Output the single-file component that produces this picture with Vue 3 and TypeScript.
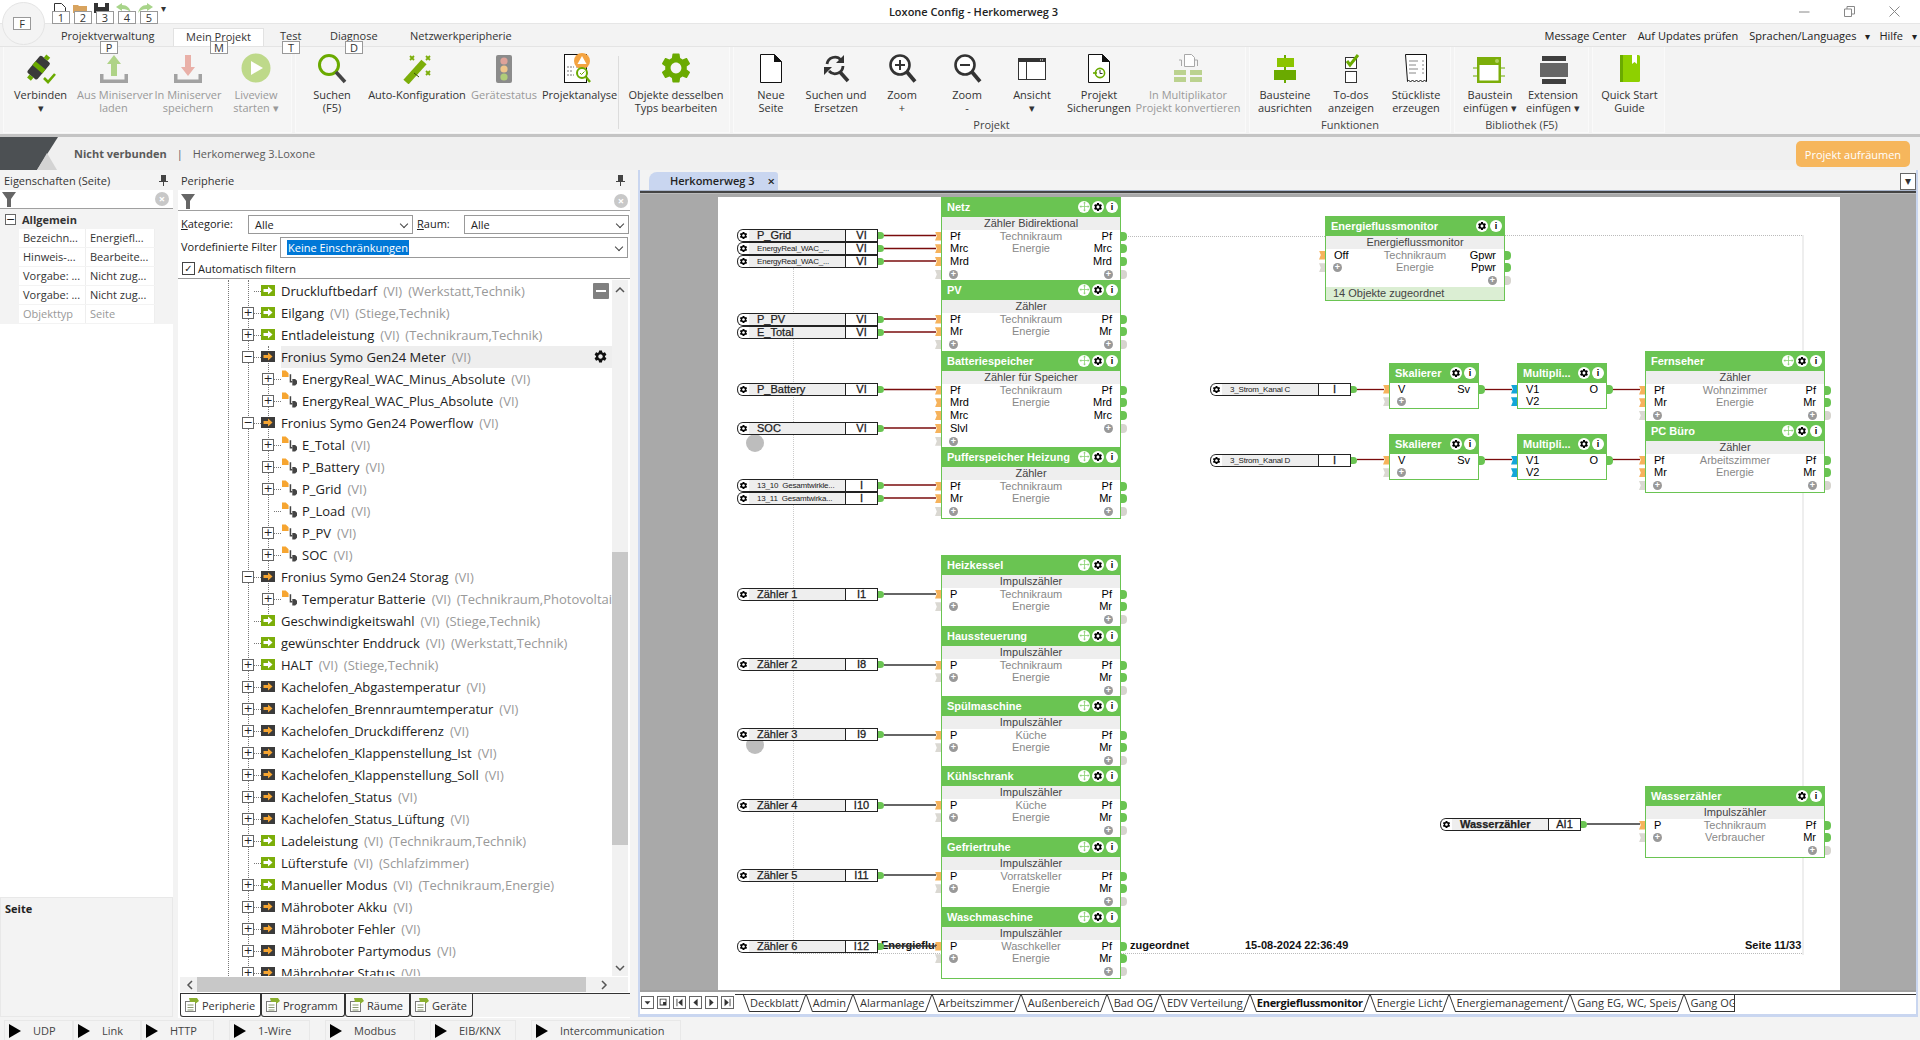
<script setup lang="ts">
type Row = [string, string, string];
interface Block {
  title: string;
  sub?: string;
  x: number;
  y: number;
  w?: number;
  rows: Row[];
  move?: boolean;
  foot?: string;
  blue?: boolean;
}
interface InBlock {
  name: string;
  val: string;
  x: number;
  y: number;
  small?: boolean;
  bold?: boolean;
  split?: number;
}

const ribbonGroups = [
  {
    w: 289,
    label: "",
    items: [
      { icon: "verbinden", w: 73, l: ["Verbinden", "▾"] },
      { icon: "upload", w: 73, l: ["Aus Miniserver", "laden"], off: true },
      { icon: "download", w: 76, l: ["In Miniserver", "speichern"], off: true },
      { icon: "live", w: 60, l: ["Liveview", "starten ▾"], off: true },
    ],
  },
  {
    w: 435,
    label: "",
    items: [
      { icon: "suchen", w: 72, l: ["Suchen", "(F5)"] },
      { icon: "auto", w: 98, l: ["Auto-Konfiguration"] },
      { icon: "status", w: 76, l: ["Gerätestatus"], off: true },
      { icon: "analyse", w: 72, l: ["Projektanalyse"], sep: true },
      { icon: "gear", w: 104, l: ["Objekte desselben", "Typs bearbeiten"] },
    ],
  },
  {
    w: 513,
    label: "Projekt",
    pad: 4,
    items: [
      { icon: "neu", w: 66, l: ["Neue", "Seite"] },
      { icon: "ersetzen", w: 64, l: ["Suchen und", "Ersetzen"] },
      { icon: "zoomin", w: 68, l: ["Zoom", "+"] },
      { icon: "zoomout", w: 62, l: ["Zoom", "-"] },
      { icon: "ansicht", w: 68, l: ["Ansicht", "▾"] },
      { icon: "sicher", w: 66, l: ["Projekt", "Sicherungen"] },
      { icon: "multi", w: 112, l: ["In Multiplikator", "Projekt konvertieren"], off: true },
    ],
  },
  {
    w: 202,
    label: "Funktionen",
    items: [
      { icon: "ausricht", w: 70, l: ["Bausteine", "ausrichten"] },
      { icon: "todo", w: 62, l: ["To-dos", "anzeigen"] },
      { icon: "stueck", w: 68, l: ["Stückliste", "erzeugen"] },
    ],
  },
  {
    w: 135,
    label: "Bibliothek (F5)",
    items: [
      { icon: "baustein", w: 70, l: ["Baustein", "einfügen ▾"] },
      { icon: "extension", w: 56, l: ["Extension", "einfügen ▾"] },
    ],
  },
  {
    w: 73,
    label: "",
    items: [{ icon: "book", w: 73, l: ["Quick Start", "Guide"] }],
  },
];

const keyTips = [
  { k: "F", x: 13, y: 17 },
  { k: "1", x: 52, y: 11 },
  { k: "2", x: 74, y: 11 },
  { k: "3", x: 96, y: 11 },
  { k: "4", x: 118, y: 11 },
  { k: "5", x: 140, y: 11 },
  { k: "P", x: 100, y: 41 },
  { k: "M", x: 210, y: 41 },
  { k: "T", x: 282, y: 41 },
  { k: "D", x: 345, y: 41 },
];

const propRows = [
  ["Bezeichn...", "Energiefl..."],
  ["Hinweis-...", "Bearbeite..."],
  ["Vorgabe: ...", "Nicht zug..."],
  ["Vorgabe: ...", "Nicht zug..."],
];

// g = grüner Eingang, d = dunkler Eingang, c = Kind-Eintrag
const n = (t: string, kind: string, exp: string, room = "") => ({ t, kind, exp, room });
const tree = [
  n("Druckluftbedarf", "g", "", "(Werkstatt,Technik)"),
  n("Eilgang", "g", "+", "(Stiege,Technik)"),
  n("Entladeleistung", "g", "+", "(Technikraum,Technik)"),
  n("Fronius Symo Gen24 Meter", "d", "-"),
  n("EnergyReal_WAC_Minus_Absolute", "c", "+"),
  n("EnergyReal_WAC_Plus_Absolute", "c", "+"),
  n("Fronius Symo Gen24 Powerflow", "d", "-"),
  n("E_Total", "c", "+"),
  n("P_Battery", "c", "+"),
  n("P_Grid", "c", "+"),
  n("P_Load", "c", ""),
  n("P_PV", "c", "+"),
  n("SOC", "c", "+"),
  n("Fronius Symo Gen24 Storag", "d", "-"),
  n("Temperatur Batterie", "c", "+", "(Technikraum,Photovoltaik)"),
  n("Geschwindigkeitswahl", "g", "", "(Stiege,Technik)"),
  n("gewünschter Enddruck", "g", "", "(Werkstatt,Technik)"),
  n("HALT", "g", "+", "(Stiege,Technik)"),
  n("Kachelofen_Abgastemperatur", "d", "+"),
  n("Kachelofen_Brennraumtemperatur", "d", "+"),
  n("Kachelofen_Druckdifferenz", "d", "+"),
  n("Kachelofen_Klappenstellung_Ist", "d", "+"),
  n("Kachelofen_Klappenstellung_Soll", "d", "+"),
  n("Kachelofen_Status", "d", "+"),
  n("Kachelofen_Status_Lüftung", "d", "+"),
  n("Ladeleistung", "g", "+", "(Technikraum,Technik)"),
  n("Lüfterstufe", "g", "", "(Schlafzimmer)"),
  n("Manueller Modus", "g", "+", "(Technikraum,Energie)"),
  n("Mähroboter Akku", "d", "+"),
  n("Mähroboter Fehler", "d", "+"),
  n("Mähroboter Partymodus", "d", "+"),
  n("Mähroboter Status", "d", "+"),
];

const periTabs = [
  { t: "Peripherie", w: 81 },
  { t: "Programm", w: 84 },
  { t: "Räume", w: 65 },
  { t: "Geräte", w: 63 },
];

const protocols = [
  { t: "UDP", w: 69 },
  { t: "Link", w: 68 },
  { t: "HTTP", w: 73, gap: 15 },
  { t: "1-Wire", w: 81, gap: 15 },
  { t: "Modbus", w: 90, gap: 15 },
  { t: "EIB/KNX", w: 86, gap: 15 },
  { t: "Intercommunication", w: 150 },
];

const pageTabs = [
  "Deckblatt",
  "Admin",
  "Alarmanlage",
  "Arbeitszimmer",
  "Außenbereich",
  "Bad OG",
  "EDV Verteilung",
  "Energieflussmonitor",
  "Energie Licht",
  "Energiemanagement",
  "Gang EG, WC, Speis",
  "Gang OG",
];

const navPaths = [
  "M3 5h7l-3.500 4z",
  "M2 2h8v8H2zM3 3v6h6V3zM6 6h3v3H6z",
  "M3 2h1v9H3zM10 2v9L5 6.500z",
  "M9 2v9L4 6.500z",
  "M4 2v9l5-4.500z",
  "M3 2v9l5-4.500zM9 2h1v9H9z",
];

const meter = (cat: string, room: string): Row[] => [
  ["Pf", room, "Pf"],
  ["Mr", cat, "Mr"],
  ["+", "", "+"],
];

const blocks: Block[] = [
  {
    title: "Netz",
    sub: "Zähler Bidirektional",
    x: 941,
    y: 197,
    move: true,
    rows: [
      ["Pf", "Technikraum", "Pf"],
      ["Mrc", "Energie", "Mrc"],
      ["Mrd", "", "Mrd"],
      ["+", "", "+"],
    ],
  },
  { title: "PV", sub: "Zähler", x: 941, y: 280, move: true, rows: meter("Energie", "Technikraum") },
  {
    title: "Batteriespeicher",
    sub: "Zähler für Speicher",
    x: 941,
    y: 351,
    move: true,
    rows: [
      ["Pf", "Technikraum", "Pf"],
      ["Mrd", "Energie", "Mrd"],
      ["Mrc", "", "Mrc"],
      ["Slvl", "", "+"],
      ["+", "", ""],
    ],
  },
  { title: "Pufferspeicher Heizung", sub: "Zähler", x: 941, y: 447, move: true, rows: meter("Energie", "Technikraum") },
  { title: "Heizkessel", sub: "Impulszähler", x: 941, y: 555, move: true, rows: impuls("Technikraum") },
  { title: "Haussteuerung", sub: "Impulszähler", x: 941, y: 626, move: true, rows: impuls("Technikraum") },
  { title: "Spülmaschine", sub: "Impulszähler", x: 941, y: 696, move: true, rows: impuls("Küche") },
  { title: "Kühlschrank", sub: "Impulszähler", x: 941, y: 766, move: true, rows: impuls("Küche") },
  { title: "Gefriertruhe", sub: "Impulszähler", x: 941, y: 837, move: true, rows: impuls("Vorratskeller") },
  { title: "Waschmaschine", sub: "Impulszähler", x: 941, y: 907, move: true, rows: impuls("Waschkeller") },
  {
    title: "Energieflussmonitor",
    sub: "Energieflussmonitor",
    x: 1325,
    y: 216,
    foot: "14 Objekte zugeordnet",
    rows: [
      ["Off", "Technikraum", "Gpwr"],
      ["+", "Energie", "Ppwr"],
      ["", "", "+"],
    ],
  },
  { title: "Skalierer", x: 1389, y: 363, w: 90, rows: [["V", "", "Sv"], ["+", "", ""]] },
  { title: "Multipli...", x: 1517, y: 363, w: 90, blue: true, rows: [["V1", "", "O"], ["V2", "", ""]] },
  { title: "Skalierer", x: 1389, y: 434, w: 90, rows: [["V", "", "Sv"], ["+", "", ""]] },
  { title: "Multipli...", x: 1517, y: 434, w: 90, blue: true, rows: [["V1", "", "O"], ["V2", "", ""]] },
  { title: "Fernseher", sub: "Zähler", x: 1645, y: 351, move: true, rows: meter("Energie", "Wohnzimmer") },
  { title: "PC Büro", sub: "Zähler", x: 1645, y: 421, move: true, rows: meter("Energie", "Arbeitszimmer") },
  { title: "Wasserzähler", sub: "Impulszähler", x: 1645, y: 786, rows: impuls("Technikraum", "Verbraucher") },
];

function impuls(room: string, cat = "Energie"): Row[] {
  return [
    ["P", room, "Pf"],
    ["+", cat, "Mr"],
    ["", "", "+"],
  ];
}

const inputs: InBlock[] = [
  { name: "P_Grid", val: "VI", x: 737, y: 229 },
  { name: "EnergyReal_WAC_...", val: "VI", x: 737, y: 242, small: true },
  { name: "EnergyReal_WAC_...", val: "VI", x: 737, y: 255, small: true },
  { name: "P_PV", val: "VI", x: 737, y: 313 },
  { name: "E_Total", val: "VI", x: 737, y: 326 },
  { name: "P_Battery", val: "VI", x: 737, y: 383 },
  { name: "SOC", val: "VI", x: 737, y: 422 },
  { name: "13_10  Gesamtwirkle...", val: "I", x: 737, y: 479, small: true },
  { name: "13_11  Gesamtwirka...", val: "I", x: 737, y: 492, small: true },
  { name: "Zähler 1", val: "I1", x: 737, y: 588 },
  { name: "Zähler 2", val: "I8", x: 737, y: 658 },
  { name: "Zähler 3", val: "I9", x: 737, y: 728 },
  { name: "Zähler 4", val: "I10", x: 737, y: 799 },
  { name: "Zähler 5", val: "I11", x: 737, y: 869 },
  { name: "Zähler 6", val: "I12", x: 737, y: 940 },
  { name: "3_Strom_Kanal C", val: "I", x: 1210, y: 383, small: true },
  { name: "3_Strom_Kanal D", val: "I", x: 1210, y: 454, small: true },
  { name: "Wasserzähler", val: "AI1", x: 1440, y: 818, bold: true },
];

const red = "#7a0c0c";
const dark = "#333";
const wires = [
  ...[235.5, 248.5, 261, 319, 332, 389.5, 428, 485, 498].map((y) => ({ a: 884, b: 936, y, c: red })),
  ...[594, 665, 735, 805, 875, 946].map((y) => ({ a: 884, b: 936, y, c: dark })),
  ...[389.5, 459.5].flatMap((y) => [
    { a: 1357, b: 1384, y, c: red },
    { a: 1485, b: 1512, y, c: red },
    { a: 1612, b: 1640, y, c: red },
  ]),
  { a: 1587, b: 1640, y: 824, c: dark },
];

// Seitenkoordinaten -> Canvas (Ursprung 640/194)
function pos(x: number, y: number) {
  return { left: `${x - 640}px`, top: `${y - 194}px` };
}
</script>

<template>
  <svg class="defs" aria-hidden="true">
    <defs>
      <symbol id="gearS" viewBox="0 0 24 24">
        <path
          fill="currentColor"
          d="M19.14 12.94c.04-.3.06-.61.06-.94 0-.32-.02-.64-.07-.94l2.03-1.58c.18-.14.23-.41.12-.61l-1.92-3.32c-.12-.22-.37-.29-.59-.22l-2.39.96c-.5-.38-1.03-.7-1.62-.94l-.36-2.54c-.04-.24-.24-.41-.48-.41h-3.84c-.24 0-.43.17-.47.41l-.36 2.54c-.59.24-1.13.57-1.62.94l-2.39-.96c-.22-.08-.47 0-.59.22L2.74 8.87c-.12.21-.08.47.12.61l2.03 1.58c-.05.3-.09.63-.09.94s.02.64.07.94l-2.03 1.58c-.18.14-.23.41-.12.61l1.92 3.32c.12.22.37.29.59.22l2.39-.96c.5.38 1.03.7 1.62.94l.36 2.54c.05.24.24.41.48.41h3.84c.24 0 .44-.17.47-.41l.36-2.54c.59-.24 1.13-.56 1.62-.94l2.39.96c.22.08.47 0 .59-.22l1.92-3.32c.12-.22.07-.47-.12-.61l-2.01-1.58zM12 15.6c-1.98 0-3.6-1.62-3.6-3.6s1.62-3.6 3.6-3.6 3.6 1.62 3.6 3.6-1.62 3.6-3.6 3.6z"
        />
      </symbol>
      <symbol id="arrowI" viewBox="0 0 14 11">
        <path d="M2.500 4H7V1.500l4.500 4L7 9.500V7H2.500z" fill="currentColor" />
      </symbol>
      <symbol id="i-verbinden" viewBox="0 0 40 32">
        <g transform="rotate(40 18 16)">
          <rect x="11" y="5" width="13" height="22" rx="2" fill="#3a3a3a" />
          <rect x="11" y="13" width="13" height="5" fill="#6aaa00" />
          <rect x="15" y="1" width="5" height="4" fill="#6aaa00" />
          <rect x="15" y="27" width="5" height="4" fill="#6aaa00" />
        </g>
        <path d="M23 26l4 4 7-8" stroke="#6aaa00" stroke-width="2.6" fill="none" />
      </symbol>
      <symbol id="i-upload" viewBox="0 0 40 32">
        <path d="M6 22v9h28v-9h-3.5v5.5h-21V22z" fill="#9a9a9a" />
        <path d="M20 3l7 9h-4v12h-6V12h-4z" fill="#a8d07c" />
      </symbol>
      <symbol id="i-download" viewBox="0 0 40 32">
        <path d="M6 22v9h28v-9h-3.5v5.5h-21V22z" fill="#9a9a9a" />
        <path d="M20 24l7-9h-4V3h-6v12h-4z" fill="#e8a9a0" />
      </symbol>
      <symbol id="i-live" viewBox="0 0 40 32">
        <circle cx="20" cy="16" r="14.5" fill="#b9d67f" />
        <path d="M15 9l12 7-12 7z" fill="#fff" />
      </symbol>
      <symbol id="i-suchen" viewBox="0 0 40 32">
        <circle cx="17" cy="13" r="9.5" fill="none" stroke="#6aaa00" stroke-width="3" />
        <path d="M24 20l9 10" stroke="#444" stroke-width="3.6" />
      </symbol>
      <symbol id="i-auto" viewBox="0 0 40 32">
        <path d="M9 30l18-20" stroke="#7cae0a" stroke-width="7" />
        <path d="M17 21l5 4" stroke="#39500a" stroke-width="1" />
        <path
          d="M13 4l4 4m0-4l-4 4M29 4l4 4m0-4l-4 4M29 19l4 4m0-4l-4 4"
          stroke="#7cae0a"
          stroke-width="1.8"
        />
      </symbol>
      <symbol id="i-status" viewBox="0 0 40 32">
        <rect x="12" y="3" width="16" height="28" rx="2" fill="#808080" />
        <circle cx="20" cy="9" r="3.6" fill="#dc9a90" />
        <circle cx="20" cy="17" r="3.6" fill="#f0c080" />
        <circle cx="20" cy="25" r="3.6" fill="#a9c86c" />
      </symbol>
      <symbol id="i-analyse" viewBox="0 0 40 32">
        <rect x="6.5" y="2.5" width="22" height="28" fill="#fff" stroke="#111" />
        <path d="M9 15h7M9 19h6M9 23h7M18 15h2" stroke="#777" stroke-dasharray="2 1" />
        <circle cx="24" cy="9" r="8" fill="#f4a340" />
        <path d="M24 4l4.5 8h-9z" fill="#fff" />
        <circle cx="24" cy="21" r="5" fill="#fff" stroke="#6aaa00" stroke-width="2" />
        <path d="M22 21l1.5 1.5 3-3" stroke="#6aaa00" fill="none" />
        <path d="M28 25l4 5" stroke="#6aaa00" stroke-width="2.4" />
      </symbol>
      <symbol id="i-gear" viewBox="0 0 40 32">
        <use href="#gearS" x="2" y="-2" width="36" height="36" color="#6aaa00" />
      </symbol>
      <symbol id="i-neu" viewBox="0 0 40 32">
        <path d="M9.5 2.5h14l7 7v21h-21z" fill="#fff" stroke="#111" />
        <path d="M23 2l8 8h-8z" fill="#111" />
      </symbol>
      <symbol id="i-ersetzen" viewBox="0 0 40 32">
        <path d="M11 12a8 8 0 0 1 14-4" fill="none" stroke="#333" stroke-width="2.8" />
        <path d="M27 14a8 8 0 0 1-14 5" fill="none" stroke="#333" stroke-width="2.8" />
        <path d="M28 3v8h-8zM8 23v-8h8z" fill="#333" />
        <path d="M24 20l8 9" stroke="#333" stroke-width="3.6" />
      </symbol>
      <symbol id="i-zoomin" viewBox="0 0 40 32">
        <circle cx="18" cy="13" r="9.5" fill="#fff" stroke="#333" stroke-width="2.6" />
        <path d="M13 13h10M18 8v10" stroke="#333" stroke-width="2" />
        <path d="M25 20l8 9.5" stroke="#333" stroke-width="3.8" />
      </symbol>
      <symbol id="i-zoomout" viewBox="0 0 40 32">
        <circle cx="18" cy="13" r="9.5" fill="#fff" stroke="#333" stroke-width="2.6" />
        <path d="M13 13h10" stroke="#333" stroke-width="2" />
        <path d="M25 20l8 9.5" stroke="#333" stroke-width="3.8" />
      </symbol>
      <symbol id="i-ansicht" viewBox="0 0 40 32">
        <rect x="6.5" y="6.5" width="27" height="21" fill="#fff" stroke="#333" />
        <rect x="6" y="6" width="28" height="4" fill="#333" />
        <path d="M14.5 10v17" stroke="#333" />
        <path d="M28 8h4" stroke="#fff" stroke-dasharray="1 1" />
      </symbol>
      <symbol id="i-sicher" viewBox="0 0 40 32">
        <path d="M9.5 2.5h14l7 7v21h-21z" fill="#fff" stroke="#111" />
        <path d="M23 2l8 8h-8z" fill="#111" />
        <circle cx="21" cy="21" r="4.6" fill="none" stroke="#6aaa00" stroke-width="1.6" />
        <path d="M21 18v3.5h2.5" fill="none" stroke="#333" />
        <path d="M14 21h4" stroke="#6aaa00" stroke-width="1.6" />
      </symbol>
      <symbol id="i-multi" viewBox="0 0 40 32">
        <path d="M16.5 2.5h7l3 3v9h-10z" fill="#fff" stroke="#a0a0a0" />
        <path d="M13.5 14V8H11M29.500 14V8H27" fill="none" stroke="#a0a0a0" />
        <path d="M6 18h12v5H6zM22 18h12v5H22zM6 25h12v5H6zM22 25h12v5H22z" fill="#b5cf85" />
      </symbol>
      <symbol id="i-ausricht" viewBox="0 0 40 32">
        <path d="M20 3v28" stroke="#6aaa00" stroke-width="2" />
        <rect x="12" y="6" width="17" height="9" fill="#8bc400" />
        <rect x="9" y="18" width="22" height="10" fill="#6aaa00" />
      </symbol>
      <symbol id="i-todo" viewBox="0 0 40 32">
        <rect x="14.500" y="5.500" width="11" height="11" fill="#fff" stroke="#333" />
        <rect x="14.500" y="19.500" width="11" height="11" fill="#fff" stroke="#333" />
        <path d="M16 9l3 4 8-10" fill="none" stroke="#6aaa00" stroke-width="3" />
      </symbol>
      <symbol id="i-stueck" viewBox="0 0 40 32">
        <path d="M9.500 2.500h21v27l-2-1-2 1-2-1-2 1-2-1-2 1-2-1-2 1-2-1-1 1z" fill="#fff" stroke="#111" />
        <path d="M13 9h9M13 13h7M13 17h9M13 21h7" stroke="#888" />
        <path d="M26 9h2M26 13h2M26 17h2M26 21h2" stroke="#888" />
      </symbol>
      <symbol id="i-baustein" viewBox="0 0 40 32">
        <rect x="7" y="5" width="24" height="26" fill="#7cae0a" />
        <rect x="9.500" y="13" width="19" height="15.500" fill="#fff" />
        <circle cx="27" cy="9" r="2" fill="#b0d060" />
        <path d="M3 16h4M3 24h4M31 16h4M31 24h4" stroke="#6aaa00" />
      </symbol>
      <symbol id="i-extension" viewBox="0 0 40 32">
        <rect x="9" y="4" width="24" height="5" fill="#3f3f3f" />
        <rect x="7" y="11" width="28" height="14" fill="#666" />
        <rect x="9" y="27" width="24" height="5" fill="#3f3f3f" />
      </symbol>
      <symbol id="i-book" viewBox="0 0 40 32">
        <rect x="10" y="3" width="20" height="27" rx="1.500" fill="#8ed000" />
        <rect x="10" y="3" width="3" height="27" fill="#6aaa00" />
        <path d="M22 3h5v9l-2.500-2-2.500 2z" fill="#fff" />
      </symbol>
      <symbol id="flagI" viewBox="0 0 16 16">
        <path d="M0 0h4l3 3v4H0z" fill="#f6a531" />
        <path d="M9 4v8h2" fill="none" stroke="#444" stroke-width="1.600" />
        <path d="M11 9h3l2 2v3l-2 2h-3z" fill="#444" />
      </symbol>
      <symbol id="tabI" viewBox="0 0 16 16">
        <rect x="1.500" y="4.500" width="10" height="10" fill="#fff" stroke="#7a7a7a" />
        <path d="M3.500 8h6M3.500 10.500h6M3.500 13h6" stroke="#8a9a70" />
        <path d="M5 1h8l2 3-4 3v-2H6z" fill="#8bb030" />
      </symbol>
      <symbol id="moveI" viewBox="0 0 12 12">
        <path d="M6 2v8M2 6h8" stroke="#8fd47a" stroke-width=".9" />
        <path d="M6 .5L7.500 2.500h-3zM6 11.500L4.500 9.500h3zM.5 6l2-1.500v3zM11.500 6l-2 1.500v-3z" fill="#8fd47a" />
      </symbol>
    </defs>
  </svg>

  <div class="app">
    <!-- Schnellzugriff + Titel -->
    <header class="titlebar">
      <div class="appcircle"></div>
      <div class="qat">
        <svg width="12" height="10" viewBox="0 0 12 10">
          <path d="M.5 10V.5h7l4 4V10" fill="#fff" stroke="#333" />
        </svg>
        <svg width="14" height="10" viewBox="0 0 14 10"><path d="M0 2h5l1 1h8v7H0z" fill="#d8a35e" /></svg>
        <svg width="15" height="10" viewBox="0 0 15 10"><path d="M0 0h15v10H0zM4 0v4h7V0z" fill="#333" fill-rule="evenodd" /></svg>
        <svg width="15" height="10" viewBox="0 0 15 10"><path d="M0 4l6-4v2c5 0 8 3 9 8-2-3-5-4-9-4v2z" fill="#a8d48a" /></svg>
        <svg width="15" height="10" viewBox="0 0 15 10"><path d="M15 4L9 0v2C4 2 1 5 0 10c2-3 5-4 9-4v2z" fill="#a8d48a" /></svg>
        <span class="qat-more">▾</span>
      </div>
      <div class="apptitle">Loxone Config - Herkomerweg 3</div>
      <div class="winbtns">
        <svg width="11" height="11" viewBox="0 0 11 11"><path d="M0 6h10.500" stroke="#888" /></svg>
        <svg width="11" height="11" viewBox="0 0 11 11">
          <path d="M.5 3h7v7.500h-7zM3 3V.5h7.500V8H8" fill="none" stroke="#888" />
        </svg>
        <svg width="11" height="11" viewBox="0 0 11 11"><path d="M.5.5l10 10m0-10l-10 10" stroke="#888" /></svg>
      </div>
    </header>

    <nav class="tabrow">
      <span class="rtab t1">Projektverwaltung</span>
      <span class="rtab active">Mein Projekt</span>
      <span class="rtab t3">Test</span>
      <span class="rtab t4">Diagnose</span>
      <span class="rtab t5">Netzwerkperipherie</span>
      <div class="rightmenu">
        <span>Message Center</span>
        <span>Auf Updates prüfen</span>
        <span>Sprachen/Languages</span>
        <span class="arr">▾</span>
        <span>Hilfe</span>
        <span class="arr">▾</span>
      </div>
    </nav>

    <section class="ribbon">
      <div
        v-for="(g, gi) in ribbonGroups"
        :key="gi"
        class="rgroup"
        :style="{ width: g.w + 'px', paddingLeft: (g.pad ?? 0) + 'px' }"
      >
        <div class="ritems">
          <div
            v-for="it in g.items"
            :key="it.icon"
            class="ritem"
            :class="{ off: it.off, sep: it.sep }"
            :style="{ width: it.w + 'px' }"
          >
            <svg class="ricon"><use :href="'#i-' + it.icon" /></svg>
            <div v-for="line in it.l" :key="line" class="rline">{{ line }}</div>
          </div>
        </div>
        <div class="rlabel">{{ g.label }}</div>
      </div>
    </section>

    <div class="statusbar">
      <svg class="chevron" width="58" height="33" viewBox="0 0 58 33">
        <path d="M0 0h58L37 33H0z" fill="#4c5053" />
        <path d="M47 16l10 17H37z" fill="#d3d3d3" />
      </svg>
      <b>Nicht verbunden</b>
      <span class="pipe">|</span>
      <span>Herkomerweg 3.Loxone</span>
      <button class="cleanup" type="button">Projekt aufräumen</button>
    </div>

    <main class="main">
      <!-- Eigenschaften -->
      <aside class="props">
        <div class="phead">
          <span>Eigenschaften (Seite)</span>
          <svg width="9" height="11" viewBox="0 0 9 11"><path d="M2 0h5v6h2v1H5v4H4V7H0V6h2z" fill="#444" /></svg>
        </div>
        <div class="pfilter">
          <svg width="14" height="15" viewBox="0 0 14 15"><path d="M0 0h14L9 7v8H5V7z" fill="#666" /></svg>
          <span class="clearx">×</span>
        </div>
        <div class="pgroup">
          <div class="pgroup-h"><span class="tbox">−</span><b>Allgemein</b></div>
          <div v-for="(r, i) in propRows" :key="i" class="prow">
            <span>{{ r[0] }}</span><span>{{ r[1] }}</span>
          </div>
          <div class="prow dim"><span>Objekttyp</span><span>Seite</span></div>
        </div>
        <div class="pblank"></div>
        <div class="pdesc"><b>Seite</b></div>
      </aside>

      <!-- Peripherie -->
      <section class="peri">
        <div class="phead">
          <span>Peripherie</span>
          <svg width="9" height="11" viewBox="0 0 9 11"><path d="M2 0h5v6h2v1H5v4H4V7H0V6h2z" fill="#444" /></svg>
        </div>
        <div class="pfilter white">
          <svg width="14" height="15" viewBox="0 0 14 15"><path d="M0 0h14L9 7v8H5V7z" fill="#666" /></svg>
          <span class="clearx">×</span>
        </div>
        <div class="selrow">
          <label class="l1"><u>K</u>ategorie:</label>
          <div class="combo c1">Alle</div>
          <label class="l2"><u>R</u>aum:</label>
          <div class="combo c2">Alle</div>
        </div>
        <div class="selrow second">
          <label class="l3">Vordefinierte Filter</label>
          <div class="combo c3"><span class="hl">Keine Einschränkungen</span></div>
        </div>
        <div class="autorow"><span class="chk">✓</span>Automatisch filtern</div>

        <div class="treewrap">
          <div class="tree">
            <i class="guide g1"></i>
            <i class="guide g2"></i>
            <i class="guide g3"></i>
            <div
              v-for="(row, i) in tree"
              :key="i"
              class="node"
              :class="{ child: row.kind === 'c', sel: row.t === 'Fronius Symo Gen24 Meter' }"
            >
              <span v-if="row.exp" class="tbox">{{ row.exp === "+" ? "+" : "−" }}</span>
              <span v-else class="tbox none"></span>
              <span class="dots"></span>
              <svg v-if="row.kind === 'c'" class="nicon c"><use href="#flagI" /></svg>
              <span v-else class="nicon" :class="row.kind"><svg width="14" height="11"><use href="#arrowI" /></svg></span>
              <span class="ntext">{{ row.t }}</span>
              <span class="nmeta">(VI)</span>
              <span v-if="row.room" class="nmeta">{{ row.room }}</span>
              <svg v-if="row.t === 'Fronius Symo Gen24 Meter'" class="rowgear"><use href="#gearS" /></svg>
              <span v-if="i === 0" class="rowminus"></span>
            </div>
          </div>
          <div class="vscroll">
            <svg width="12" height="8" viewBox="0 0 12 8"><path d="M2 6l4-4 4 4" fill="none" stroke="#555" stroke-width="1.500" /></svg>
            <div class="vthumb"></div>
            <svg class="vdown" width="12" height="8" viewBox="0 0 12 8"><path d="M2 2l4 4 4-4" fill="none" stroke="#555" stroke-width="1.500" /></svg>
          </div>
        </div>
        <div class="hscroll">
          <svg width="8" height="12" viewBox="0 0 8 12"><path d="M6 2L2 6l4 4" fill="none" stroke="#555" stroke-width="1.500" /></svg>
          <div class="hthumb"></div>
          <svg width="8" height="12" viewBox="0 0 8 12"><path d="M2 2l4 4-4 4" fill="none" stroke="#555" stroke-width="1.500" /></svg>
        </div>
        <div class="peritabs">
          <div v-for="t in periTabs" :key="t.t" class="peritab" :style="{ width: t.w + 'px' }">
            <svg width="16" height="16"><use href="#tabI" /></svg>{{ t.t }}
          </div>
        </div>
      </section>

      <!-- Dokument -->
      <section class="doc">
        <div class="doctabs">
          <div class="doctab">Herkomerweg 3<span class="docx">×</span></div>
          <div class="docdrop">▾</div>
        </div>
        <div class="docline"></div>
        <div class="canvas">
          <div class="sheet"></div>
          <i class="dot v" :style="[pos(793, 268), { height: '672px' }]"></i>
          <i class="dot h" :style="[pos(1122, 236), { width: '203px' }]"></i>
          <i class="dot h" :style="[pos(1505, 235), { width: '297px' }]"></i>
          <i class="solidv" :style="[pos(1802, 235), { height: '720px' }]"></i>
          <i class="dot h" :style="[pos(793, 953), { width: '1009px' }]"></i>
          <i class="ghost" :style="pos(746, 434)"></i>
          <i class="ghost" :style="pos(746, 736)"></i>
          <span class="foot" :style="pos(881, 939)">Energieflus</span>
          <span class="foot" :style="pos(1130, 939)">zugeordnet</span>
          <span class="foot" :style="pos(1245, 939)">15-08-2024 22:36:49</span>
          <span class="foot" :style="pos(1745, 939)">Seite 11/33</span>

          <svg class="wires" width="1276" height="796" viewBox="640 194 1276 796">
            <line
              v-for="(w, i) in wires"
              :key="i"
              :x1="w.a"
              :x2="w.b"
              :y1="w.y"
              :y2="w.y"
              :stroke="w.c"
              stroke-width="1.300"
            />
          </svg>

          <div
            v-for="(b, i) in inputs"
            :key="'in' + i"
            class="inb"
            :class="{ small: b.small, bold: b.bold }"
            :style="pos(b.x, b.y)"
          >
            <span class="incap"><svg width="9" height="9"><use href="#gearS" /></svg></span>
            <span class="inname">{{ b.name }}</span>
            <span class="inval">{{ b.val }}</span>
            <i class="out"></i>
          </div>

          <div
            v-for="(b, i) in blocks"
            :key="'b' + i"
            class="block"
            :style="[pos(b.x, b.y), { width: (b.w ?? 180) + 'px' }]"
          >
            <div class="bhead">
              <span class="btitle">{{ b.title }}</span>
              <span v-if="b.move" class="bbtn"><svg width="11" height="11"><use href="#moveI" /></svg></span>
              <span class="bbtn"><svg width="10" height="10"><use href="#gearS" /></svg></span>
              <span class="bbtn info">i</span>
            </div>
            <div v-if="b.sub" class="bsub">{{ b.sub }}</div>
            <div v-for="(r, ri) in b.rows" :key="ri" class="brow">
              <template v-if="r[0] === '+'">
                <i class="flag grey"></i><i class="add l">+</i>
              </template>
              <template v-else-if="r[0]">
                <i class="flag" :class="{ blue: b.blue }"></i><span class="lbl">{{ r[0] }}</span>
              </template>
              <span class="ctr">{{ r[1] }}</span>
              <template v-if="r[2] === '+'">
                <i class="add r">+</i><i class="nub grey"></i>
              </template>
              <template v-else-if="r[2]">
                <span class="lbr">{{ r[2] }}</span><i class="nub"></i>
              </template>
            </div>
            <div v-if="b.foot" class="bfoot">{{ b.foot }}</div>
          </div>
        </div>
        <div class="pagebar">
          <div class="navs">
            <svg v-for="(p, i) in navPaths" :key="i" class="navb" viewBox="0 0 13 13">
              <path :d="p" fill="#333" fill-rule="evenodd" />
            </svg>
          </div>
          <div class="ptabs">
            <div
              v-for="t in pageTabs"
              :key="t"
              class="ptab"
              :class="{ on: t === 'Energieflussmonitor' }"
            >
              {{ t }}
            </div>
          </div>
          <div class="pagefill"></div>
        </div>
      </section>
    </main>

    <footer class="protos">
      <div
        v-for="p in protocols"
        :key="p.t"
        class="proto"
        :style="{ width: p.w + 'px', marginRight: (p.gap ?? 0) + 'px' }"
      >
        <i class="play"></i>{{ p.t }}
      </div>
    </footer>

    <span
      v-for="k in keyTips"
      :key="k.k"
      class="keytip"
      :style="{ left: k.x + 'px', top: k.y + 'px' }"
    >{{ k.k }}</span>
  </div>
</template>

<style>
html,
body {
  margin: 0;
  background: #f3f3f3;
}
</style>

<style scoped>
.defs {
  position: absolute;
  width: 0;
  height: 0;
}
.app {
  position: relative;
  width: 1920px;
  height: 1040px;
  overflow: hidden;
  display: flex;
  flex-direction: column;
  font-family: "Open Sans", sans-serif;
  font-size: 11px;
  color: #333;
  background: #f3f3f3;
}

/* Titel */
.titlebar {
  position: relative;
  height: 24px;
  flex: none;
  background: #fff;
  border-bottom: 1px solid #e6e6e6;
  box-sizing: border-box;
}
.appcircle {
  position: absolute;
  left: 2px;
  top: 2px;
  width: 41px;
  height: 41px;
  border-radius: 50%;
  background: #f4f4f4;
  border: 1px solid #e4e4e4;
  z-index: 3;
}
.qat {
  position: absolute;
  left: 54px;
  top: 3px;
  display: flex;
  gap: 7px;
  align-items: flex-start;
}
.qat-more {
  font-size: 10px;
  line-height: 10px;
  margin-left: 1px;
}
.apptitle {
  text-align: center;
  line-height: 23px;
  font-weight: 600;
  color: #222;
  padding-left: 27px;
}
.winbtns {
  position: absolute;
  right: 20px;
  top: 6px;
  display: flex;
  gap: 34px;
}

/* Reiter */
.tabrow {
  height: 22px;
  flex: none;
  display: flex;
  align-items: flex-end;
  color: #333;
}
.rtab {
  line-height: 16px;
  height: 18px;
}
.t1 {
  margin-left: 61px;
  width: 112px;
}
.rtab.active {
  width: 91px;
  text-align: center;
  background: #fff;
  border: 1px solid #e2e2e2;
  border-bottom: 0;
  box-sizing: border-box;
}
.t3 {
  margin-left: 16px;
  width: 50px;
}
.t4 {
  width: 80px;
}
.rightmenu {
  margin-left: auto;
  display: flex;
  gap: 11px;
  padding-right: 5px;
  line-height: 16px;
  height: 18px;
  color: #222;
}
.rightmenu .arr {
  font-size: 10px;
  margin: 0 -2px;
}

/* Ribbon */
.ribbon {
  height: 91px;
  flex: none;
  display: flex;
  gap: 3px;
  padding-left: 3px;
  box-sizing: border-box;
  border-top: 1px solid #e4e4e4;
  border-bottom: 3px solid #c4c4c4;
  background: #f3f3f3;
}
.rgroup {
  display: flex;
  flex-direction: column;
  height: 86px;
  border-left: 1px solid #fafafa;
  border-right: 1px solid #fafafa;
  box-sizing: border-box;
  background: #f5f5f5;
  border-bottom: 1px solid #fafafa;
}
.ritems {
  display: flex;
  height: 72px;
  padding-top: 5px;
  box-sizing: border-box;
}
.ritem {
  position: relative;
  text-align: center;
  flex: none;
  line-height: 13px;
}
.ritem.sep {
  margin-right: 10px;
}
.ritem.sep::after {
  content: "";
  position: absolute;
  right: -5px;
  top: 4px;
  bottom: -10px;
  width: 1px;
  background: #dcdcdc;
}
.ricon {
  display: block;
  width: 40px;
  height: 32px;
  margin: 0 auto 4px;
}
.rline {
  white-space: nowrap;
}
.ritem.off {
  color: #999;
}
.ritem.off .ricon {
  opacity: 0.9;
}
.rlabel {
  text-align: center;
  line-height: 14px;
  color: #444;
}

/* Status */
.statusbar {
  position: relative;
  height: 33px;
  flex: none;
  margin-top: 0;
  padding-left: 74px;
  display: flex;
  align-items: center;
  background: #f0f0f0;
  color: #5a5a5a;
}
.chevron {
  position: absolute;
  left: 0;
  top: 0;
}
.pipe {
  margin: 0 10px;
}
.cleanup {
  position: absolute;
  right: 10px;
  top: 4px;
  width: 114px;
  height: 26px;
  border: 0;
  border-radius: 5px;
  background: #f6b65c;
  color: #fff;
  font: inherit;
  padding: 0;
}

/* Hauptbereich */
.main {
  height: 848px;
  flex: none;
  display: flex;
}
.props {
  width: 173px;
  flex: none;
  display: flex;
  flex-direction: column;
}
.phead {
  height: 20px;
  display: flex;
  align-items: center;
  justify-content: space-between;
  padding: 0 5px 0 4px;
  flex: none;
}
.pfilter {
  height: 19px;
  flex: none;
  display: flex;
  align-items: center;
  justify-content: space-between;
  box-sizing: border-box;
  padding: 0 4px 0 2px;
  border-bottom: 1px solid #a0a0a0;
  background: #fff;
}
.pfilter.white {
  margin-top: 2px;
  padding-left: 3px;
  padding-right: 2px;
}
.clearx {
  width: 14px;
  height: 14px;
  border-radius: 50%;
  background: #c8c8c8;
  color: #fff;
  text-align: center;
  line-height: 13px;
  font-weight: 700;
}
.pgroup {
  background: #f3f3f3;
  padding-bottom: 0;
}
.pgroup-h {
  height: 20px;
  display: flex;
  align-items: center;
  gap: 6px;
  padding-left: 5px;
}
.tbox {
  width: 9px;
  height: 9px;
  border: 1px solid #666;
  background: #fff;
  color: #222;
  font: 11px/9px "DejaVu Sans", sans-serif;
  text-align: center;
  flex: none;
  overflow: hidden;
}
.prow {
  margin-left: 19px;
  width: 136px;
  height: 18px;
  margin-bottom: 1px;
  display: grid;
  grid-template-columns: 67px 69px;
  line-height: 18px;
  color: #333;
  white-space: nowrap;
}
.prow span {
  background: #fff;
  padding-left: 4px;
  overflow: hidden;
  border-right: 1px solid #eee;
}
.prow.dim {
  color: #999;
}
.pblank {
  flex: 1;
  background: #fff;
}
.pdesc {
  height: 120px;
  flex: none;
  padding: 3px 4px;
  background: #f3f3f3;
  border: 1px solid #e8e8e8;
  box-sizing: border-box;
  color: #222;
  margin-bottom: 1px;
}

/* Peripherie */
.peri {
  width: 452px;
  flex: none;
  margin-left: 5px;
  display: flex;
  flex-direction: column;
  background: #fff;
}
.peri .phead {
  background: #f3f3f3;
  padding-left: 3px;
  padding-right: 5px;
}
.selrow {
  display: flex;
  align-items: center;
  height: 19px;
  margin-top: 4px;
  color: #222;
  flex: none;
}
.selrow.second {
  height: 21px;
  margin-top: 3px;
}
.selrow label {
  padding-bottom: 2px;
}
.l1 {
  margin-left: 3px;
  width: 67px;
}
.l2 {
  margin-left: 4px;
  width: 47px;
}
.l3 {
  margin-left: 3px;
  width: 99px;
}
.combo {
  position: relative;
  height: 100%;
  border: 1px solid #999;
  box-sizing: border-box;
  padding: 0 0 1px 6px;
  display: flex;
  align-items: center;
}
.combo::after {
  content: "";
  position: absolute;
  right: 5px;
  top: 50%;
  width: 5px;
  height: 5px;
  margin-top: -4px;
  border-right: 1px solid #444;
  border-bottom: 1px solid #444;
  transform: rotate(45deg);
}
.c1 {
  width: 165px;
}
.c2 {
  width: 165px;
}
.c3 {
  width: 348px;
}
.hl {
  background: #0078d7;
  color: #fff;
  padding: 0 1px;
  line-height: 15px;
}
.autorow {
  height: 20px;
  flex: none;
  display: flex;
  align-items: center;
  gap: 3px;
  padding-left: 4px;
  color: #222;
  border-bottom: 1px solid #999;
}
.chk {
  width: 11px;
  height: 11px;
  border: 1px solid #444;
  font: 10px/11px "DejaVu Sans", sans-serif;
  text-align: center;
}
.treewrap {
  flex: none;
  height: 697px;
  display: flex;
  overflow: hidden;
  padding-top: 1px;
  box-sizing: border-box;
}
.tree {
  position: relative;
  flex: 1;
  min-width: 0;
  overflow: hidden;
  font-size: 13px;
}
.guide {
  position: absolute;
  top: 0;
  bottom: 0;
  width: 0;
  border-left: 1px dotted #777;
}
.g1 {
  left: 50px;
}
.g2 {
  left: 70px;
}
.g3 {
  left: 90px;
  top: 66px;
  height: 270px;
  bottom: auto;
}
.node {
  position: relative;
  height: 22px;
  display: flex;
  align-items: center;
  padding-left: 64px;
  white-space: nowrap;
  color: #222;
}
.node.child {
  padding-left: 84px;
}
.node.sel::before {
  content: "";
  position: absolute;
  left: 103px;
  top: 0;
  bottom: 0;
  right: 0;
  background: #eeeeee;
}
.node > * {
  position: relative;
}
.node .tbox {
  width: 10px;
  height: 10px;
  line-height: 10px;
}
.tbox.none {
  visibility: hidden;
}
.dots {
  width: 7px;
  border-top: 1px dotted #777;
  flex: none;
}
.nicon {
  width: 14px;
  height: 11px;
  margin-top: -2px;
  margin-right: 6px;
  flex: none;
  display: flex;
  align-items: center;
  justify-content: center;
  overflow: hidden;
}
.nicon.g {
  background: #7cae0a;
  color: #fff;
}
.nicon.d {
  background: #3b3b3b;
  color: #f6a531;
}
.nicon.c {
  width: 15px;
  height: 16px;
  margin: -3px 5px 0 1px;
}
.nmeta {
  color: #999;
  margin-left: 6px;
}
.rowgear {
  position: absolute;
  left: 415px;
  top: 3px;
  width: 15px;
  height: 15px;
  color: #111;
}
.rowminus {
  position: absolute;
  left: 415px;
  top: 3px;
  width: 16px;
  height: 16px;
  background: #808080
    linear-gradient(#fff, #fff) center / 10px 2px no-repeat;
  border-radius: 1px;
}
.vscroll {
  position: relative;
  width: 16px;
  flex: none;
  background: #f1f1f1;
  text-align: center;
  margin-right: 2px;
}
.vscroll svg {
  position: absolute;
  left: 2px;
  top: 6px;
}
.vscroll .vdown {
  top: auto;
  bottom: 4px;
}
.vthumb {
  position: absolute;
  left: 0;
  right: 0;
  top: 272px;
  height: 293px;
  background: #c8c8c8;
}
.hscroll {
  height: 15px;
  flex: none;
  margin-top: 1px;
  margin-left: 2px;
  margin-right: 2px;
  display: flex;
  align-items: center;
  background: #f1f1f1;
  padding: 0 0 0 6px;
}
.hthumb {
  width: 389px;
  height: 100%;
  margin: 0 14px 0 3px;
  background: #c8c8c8;
}
.peritabs {
  display: flex;
  flex: none;
  height: 24px;
  margin-top: 1px;
  margin-left: 2px;
  background: #f3f3f3;
  border-top: 1px solid #333;
  box-sizing: border-box;
}
.peritab {
  display: flex;
  align-items: center;
  gap: 2px;
  padding-left: 3px;
  box-sizing: border-box;
  height: 23px;
  border: 1px solid #333;
  border-top: 0;
  border-radius: 0 0 3px 3px;
  background: #f7f7f7;
  white-space: nowrap;
}
.peritab:first-child {
  background: #fff;
}

/* Dokument */
.doc {
  width: 1280px;
  flex: none;
  margin-left: 8px;
  display: flex;
  flex-direction: column;
  height: 847px;
  box-sizing: border-box;
  border-left: 2px solid #c9d6f0;
  border-right: 2px solid #c9d6f0;
  border-bottom: 3px solid #c9d6f0;
  position: relative;
}
.doctabs {
  height: 20px;
  flex: none;
  background: #f3f3f3;
  position: relative;
  display: flex;
  align-items: flex-end;
  padding-left: 0;
}
.doctab {
  margin-left: 9px;
  width: 129px;
  height: 18px;
  background: #c9d6f0;
  border-radius: 8px 3px 0 0;
  padding-left: 21px;
  box-sizing: border-box;
  font-weight: 600;
  line-height: 18px;
  color: #222;
  position: relative;
}
.docx {
  position: absolute;
  right: 3px;
  top: 0;
  font-size: 13px;
}
.docdrop {
  position: absolute;
  right: 0;
  top: 3px;
  width: 14px;
  height: 15px;
  border: 1px solid #666;
  background: #fff;
  font-size: 12px;
  line-height: 13px;
  text-align: center;
}
.docline {
  height: 4px;
  flex: none;
  background: linear-gradient(#aab6cc 0 1px, #444 1px 3px, #bbb 3px);
}
.canvas {
  position: relative;
  height: 796px;
  flex: none;
  overflow: hidden;
  background: #a9a9a9;
  border-left: 0;
  font-family: "Liberation Sans", Arial, sans-serif;
  font-size: 11px;
}
.sheet {
  position: absolute;
  left: 78px;
  top: 3px;
  width: 1122px;
  bottom: 0;
  background: #fff;
}
.dot,
.solidv {
  position: absolute;
  display: block;
}
.dot.v {
  border-left: 1px dotted #ccc;
}
.dot.h {
  border-top: 1px dotted #bbb;
}
.solidv {
  width: 2px;
  background: #eee;
}
.ghost {
  position: absolute;
  width: 18px;
  height: 18px;
  border-radius: 50%;
  background: #bdbdbd;
}
.foot {
  position: absolute;
  font-weight: 700;
  font-size: 11px;
  line-height: 13px;
  color: #111;
  white-space: nowrap;
}
.wires {
  position: absolute;
  left: 0;
  top: 0;
}
.inb {
  position: absolute;
  width: 141px;
  height: 13px;
  display: flex;
  box-sizing: border-box;
  border: 1px solid #222;
  border-left: 0;
  border-radius: 6px 0 0 6px;
  line-height: 11px;
  font-size: 11px;
  color: #222;
  background: #eee;
}
.incap {
  width: 11px;
  flex: none;
  display: flex;
  align-items: center;
  justify-content: center;
  background: #fff;
  border-radius: 6px 0 0 6px;
  border-left: 1px solid #222;
  color: #000;
}
.inname {
  width: 97px;
  flex: none;
  padding-left: 8px;
  box-sizing: border-box;
  overflow: hidden;
  white-space: pre;
  border-right: 1px solid #222;
  -webkit-text-stroke: 0.25px #222;
}
.inb.small .inname {
  font-size: 8px;
  letter-spacing: -0.2px;
  -webkit-text-stroke: 0;
}
.inb.bold .inname {
  font-weight: 700;
}
.inval {
  flex: 1;
  text-align: center;
  background: #fff;
  -webkit-text-stroke: 0.3px #222;
}
.inb .out {
  position: absolute;
  right: -7px;
  top: 2px;
  width: 6px;
  height: 7px;
  background: #6ac452;
  border-radius: 0 4px 4px 0;
}
.block {
  position: absolute;
  background: #fff;
  border: 1px solid #6ac452;
  border-top: 0;
  box-sizing: border-box;
  padding-bottom: 0;
}
.bhead {
  height: 19.500px;
  margin: 0 -1px;
  background: #6ac452;
  display: flex;
  align-items: center;
  padding: 0 3px 0 6px;
  gap: 2px;
  color: #fff;
  font-weight: 700;
}
.btitle {
  flex: 1;
  white-space: nowrap;
  overflow: visible;
}
.bbtn {
  width: 12px;
  height: 12px;
  border-radius: 50%;
  background: #fff;
  display: flex;
  align-items: center;
  justify-content: center;
  color: #000;
  font-size: 9px;
  flex: none;
}
.bsub {
  height: 13px;
  line-height: 13px;
  background: #eee;
  text-align: center;
  color: #444;
}
.brow {
  position: relative;
  height: 12.800px;
  line-height: 12.800px;
  text-align: center;
  color: #000;
}
.lbl {
  position: absolute;
  left: 8px;
}
.lbr {
  position: absolute;
  right: 8px;
}
.ctr {
  color: #888;
}
.flag {
  position: absolute;
  left: -7px;
  top: 2px;
  width: 6px;
  height: 9px;
  background: #f6b35c;
  clip-path: polygon(0 0, 100% 0, 100% 100%, 0 100%, 30% 50%);
}
.flag.blue {
  background: #13a6d8;
}
.flag.grey {
  background: #dad8d2;
}
.nub {
  position: absolute;
  right: -7px;
  top: 2px;
  width: 6px;
  height: 9px;
  border-radius: 0 4px 4px 0;
  background: #6ac452;
}
.nub.grey {
  background: #d6d4ce;
}
.add {
  position: absolute;
  top: 2px;
  width: 9px;
  height: 9px;
  border-radius: 50%;
  background: #999;
  color: #fff;
  font: 700 9px/9px "Liberation Sans", sans-serif;
  text-align: center;
}
.add.l {
  left: 7px;
}
.add.r {
  right: 7px;
}
.bfoot {
  height: 13px;
  line-height: 13px;
  background: #dbeed3;
  padding-left: 7px;
  color: #444;
}
.pagebar {
  flex: none;
  height: 24px;
  display: flex;
  align-items: flex-start;
  padding-top: 4px;
  box-sizing: border-box;
  border-top: 2px solid #a0a0a0;
  background: #fff;
}
.navs {
  display: flex;
  gap: 3px;
  padding-left: 1px;
  width: 94px;
  flex: none;
}
.navb {
  width: 13px;
  height: 13px;
  border: 1px solid #666;
  box-sizing: border-box;
}
.ptabs {
  display: flex;
  width: 1000px;
  height: 18px;
  overflow: hidden;
  flex: none;
  padding-left: 15px;
  box-sizing: border-box;
  border-top: 1px solid #333;
  border-right: 1px solid #333;
  margin-top: -2px;
  gap: 14px;
}
.pagefill {
  flex: 1;
  border-top: 1px solid #333;
  margin-top: -2px;
}
.ptab {
  position: relative;
  height: 16px;
  line-height: 16px;
  flex: none;
  border-bottom: 1px solid #333;
  white-space: nowrap;
  color: #333;
}
.ptab::before,
.ptab::after {
  content: "";
  position: absolute;
  top: 0;
  height: 17px;
  width: 1px;
  background: #333;
}
.ptab::before {
  left: -4px;
  transform: skewX(20deg);
}
.ptab::after {
  right: -4px;
  transform: skewX(-20deg);
}
.ptab.on {
  font-weight: 700;
  color: #111;
  letter-spacing: -0.3px;
}

/* Protokollleiste */
.protos {
  height: 22px;
  flex: none;
  display: flex;
  padding-left: 4px;
  padding-top: 2px;
  box-sizing: border-box;
}
.proto {
  display: flex;
  align-items: center;
  box-sizing: border-box;
  padding-left: 4px;
  border: 1px solid #e8e8e8;
  border-bottom: 0;
  color: #444;
  white-space: nowrap;
}
.play {
  width: 0;
  height: 0;
  margin-right: 12px;
  border-style: solid;
  border-width: 7px 0 7px 12px;
  border-color: transparent transparent transparent #000;
  flex: none;
}
.keytip {
  position: absolute;
  z-index: 5;
  width: 18px;
  height: 13px;
  line-height: 12px;
  text-align: center;
  font-size: 11px;
  background: #fff;
  border: 1px solid #999;
  box-sizing: border-box;
  color: #333;
}
</style>
